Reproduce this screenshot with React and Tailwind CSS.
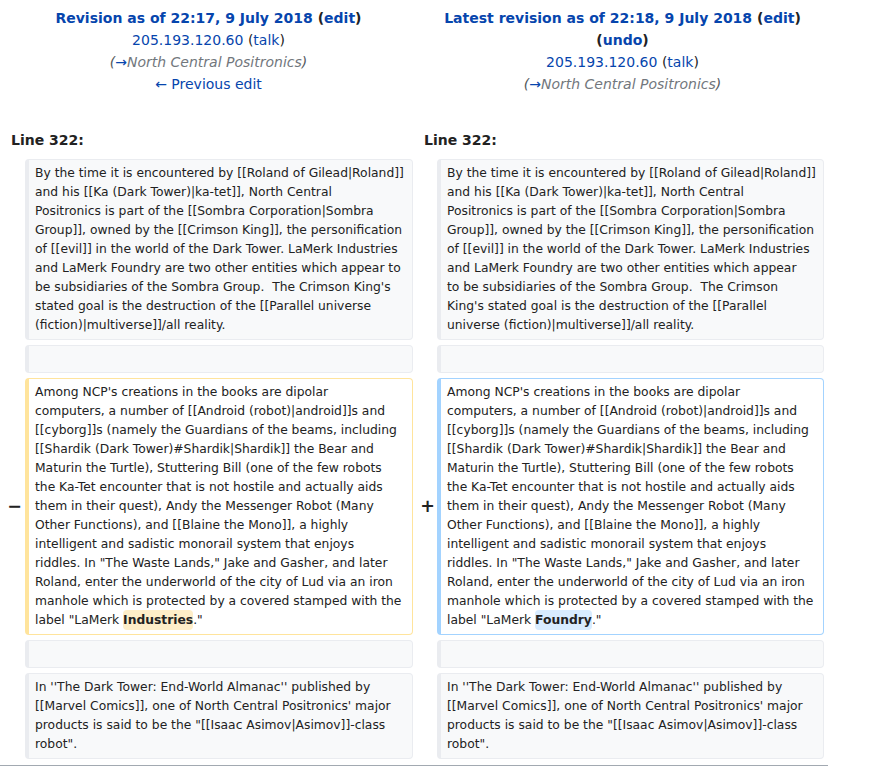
import React from 'react';

const font = { fontFamily: '"DejaVu Sans", sans-serif' };

// líneas tal como salen en la captura
const parrafo1Izq = [
  'By the time it is encountered by [[Roland of Gilead|Roland]]',
  'and his [[Ka (Dark Tower)|ka-tet]], North Central',
  'Positronics is part of the [[Sombra Corporation|Sombra',
  'Group]], owned by the [[Crimson King]], the personification',
  'of [[evil]] in the world of the Dark Tower. LaMerk Industries',
  'and LaMerk Foundry are two other entities which appear to',
  "be subsidiaries of the Sombra Group.  The Crimson King's",
  'stated goal is the destruction of the [[Parallel universe',
  '(fiction)|multiverse]]/all reality.',
].join('\n');

const parrafo1Der = [
  'By the time it is encountered by [[Roland of Gilead|Roland]]',
  'and his [[Ka (Dark Tower)|ka-tet]], North Central',
  'Positronics is part of the [[Sombra Corporation|Sombra',
  'Group]], owned by the [[Crimson King]], the personification',
  'of [[evil]] in the world of the Dark Tower. LaMerk Industries',
  'and LaMerk Foundry are two other entities which appear',
  'to be subsidiaries of the Sombra Group.  The Crimson',
  "King's stated goal is the destruction of the [[Parallel",
  'universe (fiction)|multiverse]]/all reality.',
].join('\n');

const parrafo2 = [
  "Among NCP's creations in the books are dipolar",
  'computers, a number of [[Android (robot)|android]]s and',
  '[[cyborg]]s (namely the Guardians of the beams, including',
  '[[Shardik (Dark Tower)#Shardik|Shardik]] the Bear and',
  'Maturin the Turtle), Stuttering Bill (one of the few robots',
  'the Ka-Tet encounter that is not hostile and actually aids',
  'them in their quest), Andy the Messenger Robot (Many',
  'Other Functions), and [[Blaine the Mono]], a highly',
  'intelligent and sadistic monorail system that enjoys',
  'riddles. In "The Waste Lands," Jake and Gasher, and later',
  'Roland, enter the underworld of the city of Lud via an iron',
  'manhole which is protected by a covered stamped with the',
  'label "LaMerk ',
].join('\n');

const parrafo3 = [
  "In ''The Dark Tower: End-World Almanac'' published by",
  "[[Marvel Comics]], one of North Central Positronics' major",
  'products is said to be the "[[Isaac Asimov|Asimov]]-class',
  'robot".',
].join('\n');

function Link({ children }) {
  return <a className="text-[#0645ad] cursor-pointer">{children}</a>;
}

function Context({ children, empty }) {
  return (
    <div
      className={`bg-[#f8f9fa] border border-[#eaecf0] border-l-4 rounded-[4px] text-[#222] text-[12.32px] leading-[19px] px-[6px] py-[4px] whitespace-pre ${
        empty ? 'h-[28px]' : ''
      }`}
    >
      {children}
    </div>
  );
}

function Changed({ children, color }) {
  return (
    <div
      className={`bg-white border border-l-4 rounded-[4px] text-[#222] text-[12.32px] leading-[19px] px-[6px] py-[4px] whitespace-pre ${color}`}
    >
      {children}
    </div>
  );
}

function Marker({ sign, pr }) {
  return (
    <div className={`flex items-center justify-end font-bold text-[17.5px] text-[#222] ${pr}`}>
      {sign}
    </div>
  );
}

export default function App() {
  return (
    <div className="w-[874px] h-[781px] bg-white overflow-hidden" style={font}>
      <div className="w-[828px]">
        {/* cabeceras de revisión */}
        <div className="grid grid-cols-[417px_411px] pt-[7px] text-[14px] leading-[22px] text-[#222] text-center">
          <div className="flex flex-col items-center">
            <p className="font-bold">
              <Link>Revision as of 22:17, 9 July 2018</Link> (<Link>edit</Link>)
            </p>
            <p>
              <Link>205.193.120.60</Link> (<Link>talk</Link>)
            </p>
            <p className="italic text-[#54595d]">
              (<Link>→</Link>
              <span className="text-[#72777d]">North Central Positronics</span>)
            </p>
            <p>
              <Link>← Previous edit</Link>
            </p>
          </div>
          <div className="flex flex-col items-center">
            <p className="font-bold">
              <Link>Latest revision as of 22:18, 9 July 2018</Link> (<Link>edit</Link>)
            </p>
            <p className="font-bold">
              (<Link>undo</Link>)
            </p>
            <p>
              <Link>205.193.120.60</Link> (<Link>talk</Link>)
            </p>
            <p className="italic text-[#54595d]">
              (<Link>→</Link>
              <span className="text-[#72777d]">North Central Positronics</span>)
            </p>
          </div>
        </div>

        {/* número de línea */}
        <div className="grid grid-cols-[424px_404px] mt-[34px] text-[14px] leading-[22px] font-bold text-[#222]">
          <p className="pl-[11px]">Line 322:</p>
          <p>Line 322:</p>
        </div>

        <div className="grid grid-cols-[25px_388px_24px_387px] gap-y-[5px] mt-[8px]">
          <div></div>
          <Context>{parrafo1Izq}</Context>
          <div></div>
          <Context>{parrafo1Der}</Context>

          <div></div>
          <Context empty>{'\u00a0'}</Context>
          <div></div>
          <Context empty>{'\u00a0'}</Context>

          <Marker sign="−" pr="pr-[3px]" />
          <Changed color="border-[#ffe49c]">
            {parrafo2}
            <span className="bg-[#feeec8] font-bold rounded-[4px] py-[3px]">Industries</span>
            ."
          </Changed>
          <Marker sign="+" pr="pr-[2px]" />
          <Changed color="border-[#a3d3ff]">
            {parrafo2}
            <span className="bg-[#d8ecff] font-bold rounded-[4px] py-[3px]">Foundry</span>
            ."
          </Changed>

          <div></div>
          <Context empty>{'\u00a0'}</Context>
          <div></div>
          <Context empty>{'\u00a0'}</Context>

          <div></div>
          <Context>{parrafo3}</Context>
          <div></div>
          <Context>{parrafo3}</Context>
        </div>

        <div className="mt-[6px] border-t border-[#a2a9b1]"></div>
      </div>
    </div>
  );
}
